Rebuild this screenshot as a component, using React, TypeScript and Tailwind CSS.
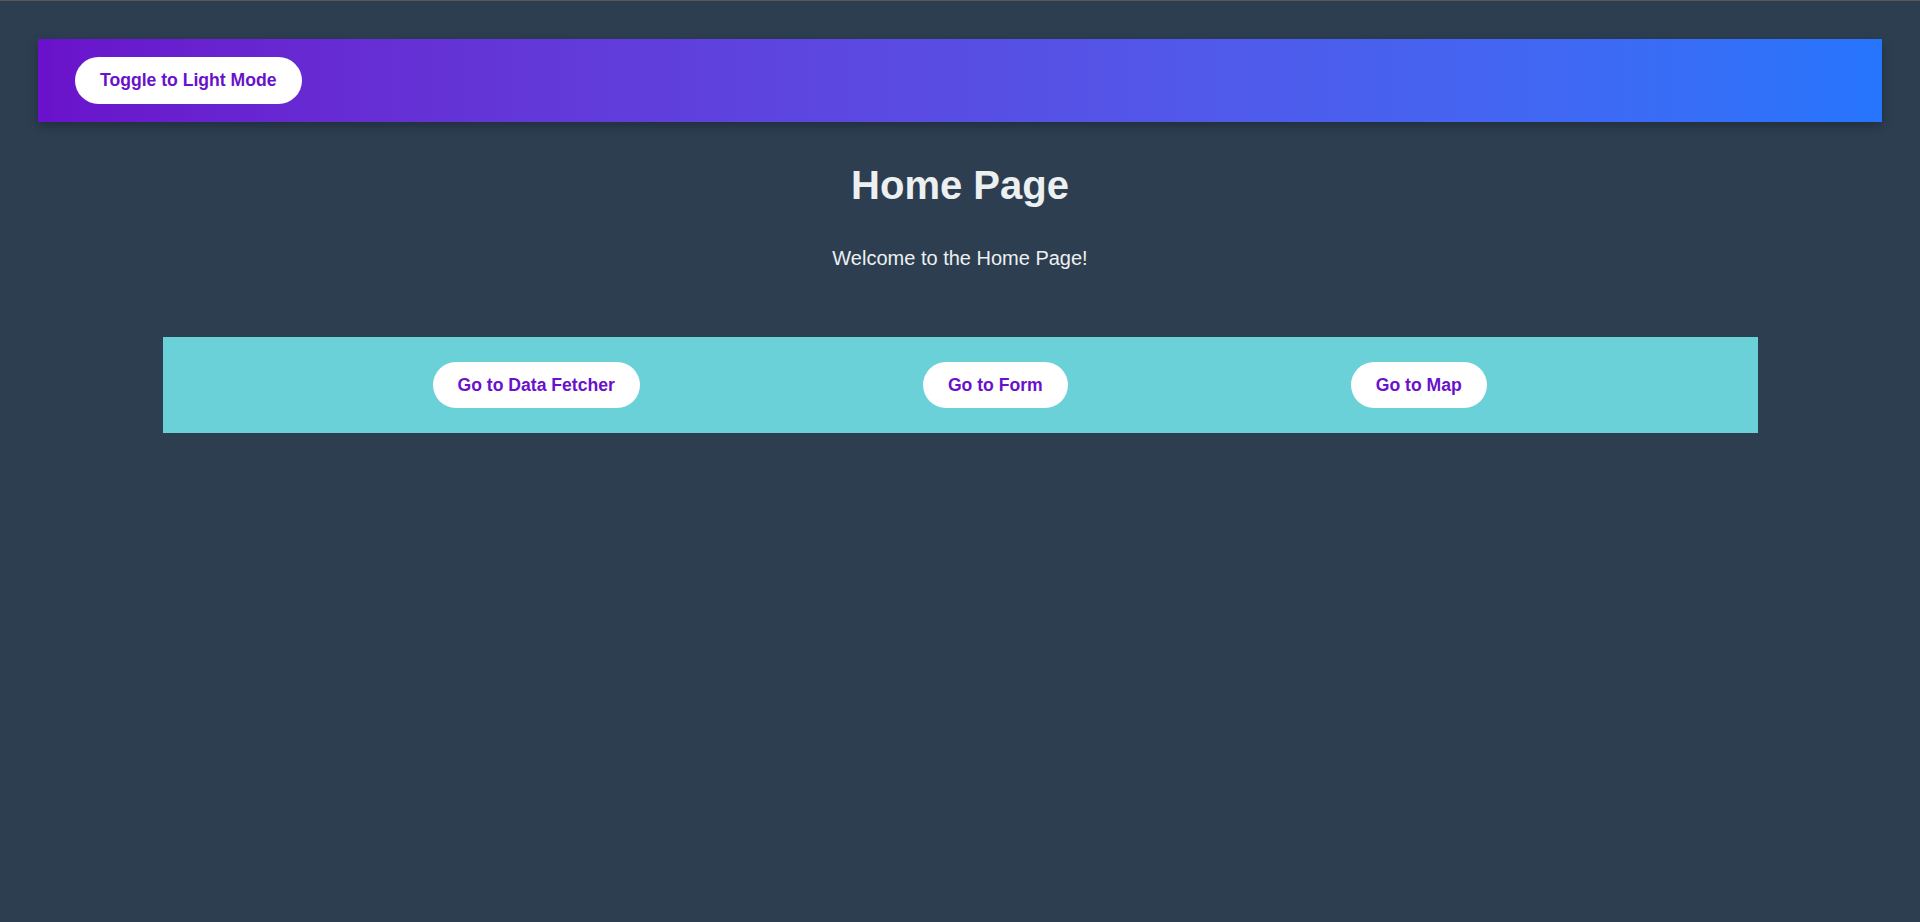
const links = [
  { label: "Go to Data Fetcher", gap: "ml-[270px]" },
  { label: "Go to Form", gap: "ml-[283px]" },
  { label: "Go to Map", gap: "ml-[283px]" },
];

const pill =
  "bg-white text-[#6a11cb] font-bold text-[17.6px] leading-[normal] py-[12.8px] px-[25px] rounded-full whitespace-nowrap";

export default function App() {
  return (
    <div className="min-h-screen bg-[#2c3e50] border-t border-[#585858] pt-[38px] px-[38px] font-['Liberation_Sans',Arial,sans-serif] text-[#ecf0f1]">
      {/* Header bar */}
      <header className="h-[83px] flex items-center pl-[37px] bg-gradient-to-r from-[#6a11cb] to-[#2575fc] shadow-[0_4px_10px_rgba(0,0,0,0.25)]">
        <button className={pill}>Toggle to Light Mode</button>
      </header>

      <main className="flex flex-col items-center">
        <h1 className="mt-[41px] text-[40px] font-bold leading-[normal]">Home Page</h1>
        <p className="mt-[39px] text-[20px] leading-[normal]">Welcome to the Home Page!</p>

        {/* Navigation strip */}
        <nav className="mt-[67px] w-[1595px] h-[96px] bg-[#6bd1d8] flex items-center">
          {links.map((link) => (
            <button key={link.label} className={`${pill} ${link.gap}`}>
              {link.label}
            </button>
          ))}
        </nav>
      </main>
    </div>
  );
}
